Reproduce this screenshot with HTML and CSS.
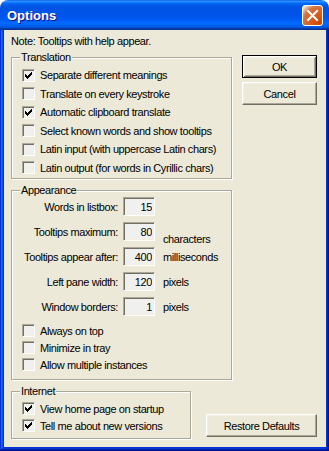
FILE: index.html
```html
<!DOCTYPE html>
<html lang="en">
<head>
    <meta charset="UTF-8">
    <meta name="viewport" content="width=device-width, initial-scale=1.0">
    <title>Options</title>
    <link rel="stylesheet" href="styles.css">
</head>
<body>
    <svg class="defs" width="0" height="0">
        <defs>
            <symbol id="tick" viewBox="0 0 9 9">
                <path d="M1 3h1v3H1zM2 4h1v3H2zM3 5h1v3H3zM4 4h1v3H4zM5 3h1v3H5zM6 2h1v3H6zM7 1h1v3H7z"/>
            </symbol>
        </defs>
    </svg>

    <div class="window">
        <div class="titlebar">
            <span class="title">Options</span>
            <span class="close">
                <svg width="19" height="19" viewBox="0 0 19 19"><path d="M5 5L14 14M14 5L5 14" stroke="#fff" stroke-width="2" stroke-linecap="square"/></svg>
            </span>
        </div>

        <div class="frame">
            <div class="client">
                <p class="note">Note: Tooltips with help appear.</p>

                <div class="main">
                    <div class="groups">
                        <fieldset class="group translation">
                            <legend>Translation</legend>
                            <div class="check"><span class="box"><svg><use href="#tick"/></svg></span>Separate different meanings</div>
                            <div class="check"><span class="box"></span>Translate on every keystroke</div>
                            <div class="check"><span class="box"><svg><use href="#tick"/></svg></span>Automatic clipboard translate</div>
                            <div class="check"><span class="box"></span>Select known words and show tooltips</div>
                            <div class="check"><span class="box"></span>Latin input (with uppercase Latin chars)</div>
                            <div class="check"><span class="box"></span>Latin output (for words in Cyrillic chars)</div>
                        </fieldset>

                        <fieldset class="group appearance">
                            <legend>Appearance</legend>
                            <div class="fields">
                                <label>Words in listbox:</label>
                                <input class="edit" type="text" value="15">
                                <span></span>

                                <label>Tooltips maximum:</label>
                                <input class="edit" type="text" value="80">
                                <span class="unit low">characters</span>

                                <label>Tooltips appear after:</label>
                                <input class="edit" type="text" value="400">
                                <span class="unit">milliseconds</span>

                                <label>Left pane width:</label>
                                <input class="edit" type="text" value="120">
                                <span class="unit">pixels</span>

                                <label>Window borders:</label>
                                <input class="edit" type="text" value="1">
                                <span class="unit">pixels</span>
                            </div>
                            <div class="check"><span class="box"></span>Always on top</div>
                            <div class="check"><span class="box"></span>Minimize in tray</div>
                            <div class="check"><span class="box"></span>Allow multiple instances</div>
                        </fieldset>
                    </div>

                    <div class="side">
                        <button class="btn default">OK</button>
                        <button class="btn">Cancel</button>
                    </div>
                </div>

                <div class="bottom">
                    <fieldset class="group internet">
                        <legend>Internet</legend>
                        <div class="check"><span class="box"><svg><use href="#tick"/></svg></span>View home page on startup</div>
                        <div class="check"><span class="box"><svg><use href="#tick"/></svg></span>Tell me about new versions</div>
                    </fieldset>
                    <button class="btn restore">Restore Defaults</button>
                </div>
            </div>
        </div>
    </div>
</body>
</html>
```

FILE: styles.css
```css
body {
    margin: 0;
    background: #fff;
    font-family: "Liberation Sans", Arial, sans-serif;
    font-size: 11px;
    letter-spacing: -0.4px;
    color: #000;
}

.defs {
    position: absolute;
}

.window {
    width: 329px;
    height: 451px;
    display: flex;
    flex-direction: column;
}

/* title bar */
.titlebar {
    height: 30px;
    flex-shrink: 0;
    display: flex;
    align-items: center;
    justify-content: space-between;
    padding: 0 6px 0 7px;
    border-radius: 8px 8px 0 0;
    background: linear-gradient(to bottom, #0058ee 0%, #3593ff 4%, #288eff 6%, #127dff 8%, #036ffc 10%, #0262ee 14%, #0057e5 20%, #0054e3 24%, #0055eb 56%, #005bf5 66%, #026afe 76%, #0062ef 86%, #0052d6 92%, #0040ab 94%, #003092 100%);
    color: #fff;
}

.title {
    font-size: 13px;
    font-weight: bold;
    letter-spacing: 0;
    text-shadow: 1px 1px #0f1089;
}

.close {
    width: 21px;
    height: 21px;
    box-sizing: border-box;
    display: flex;
    border: 1px solid #fff;
    border-radius: 3px;
    margin-top: 1px;
    background: radial-gradient(circle at 90% 90%, #cc4600 0%, #dc6527 55%, #cd7546 70%, #ffccb2 90%, #fff 100%);
}

/* window frame */
.frame {
    flex: 1;
    display: flex;
    padding: 0 4px 4px;
    background: #0831d9;
    box-shadow: inset -1px -1px #00138c, inset 1px 0 #0831d9, inset -2px -2px #001ea0, inset 2px 0 #166aee, inset -3px -3px #003bda, inset 3px 0 #0855dd;
}

.client {
    flex: 1;
    background: #ece9d8;
    padding: 5px 9px 0 7px;
}

.note {
    margin: 0 0 3px;
    line-height: 13px;
}

.main {
    display: flex;
    align-items: flex-start;
    gap: 10px;
}

.groups {
    width: 221px;
}

/* etched group boxes */
.group {
    margin: 0;
    min-width: 0;
    padding: 2px 0 1px 10px;
    border: 1px solid #aca899;
    box-shadow: inset 1px 1px #fff, 1px 1px #fff;
}

.group legend {
    padding: 0 1px;
    margin-left: -2px;
    line-height: 13px;
    background: #ece9d8;
}

.appearance {
    margin-top: 5px;
    padding-top: 0;
    padding-bottom: 6px;
}

.internet {
    width: 180px;
    box-sizing: border-box;
    padding-bottom: 4px;
}

/* checkboxes */
.check {
    display: flex;
    align-items: center;
    gap: 5px;
    height: 18.5px;
    white-space: nowrap;
}

.appearance .check,
.internet .check {
    height: 17px;
}

.box {
    width: 13px;
    height: 13px;
    flex-shrink: 0;
    box-sizing: border-box;
    padding: 1px;
    border: 1px solid;
    border-color: #aca899 #fff #fff #aca899;
    box-shadow: inset 1px 1px #716f64, inset -1px -1px #f1efe2;
    background: #f0f0ee;
}

.box svg {
    display: block;
    width: 9px;
    height: 9px;
    fill: #000;
}

/* edit fields */
.fields {
    display: grid;
    grid-template-columns: 100px 32px auto;
    column-gap: 5px;
    row-gap: 6px;
    margin-left: -4px;
    margin-bottom: 6px;
}

.fields label {
    text-align: right;
    align-self: center;
    white-space: nowrap;
}

.edit {
    width: 32px;
    height: 19px;
    box-sizing: border-box;
    margin: 0;
    padding: 0 2px 0 0;
    font: inherit;
    letter-spacing: inherit;
    text-align: right;
    border: 1px solid;
    border-color: #aca899 #fff #fff #aca899;
    box-shadow: inset 1px 1px #716f64, inset -1px -1px #f1efe2;
    background: #f0f0ee;
    color: #000;
    outline: none;
}

.unit {
    align-self: center;
    padding-left: 3px;
    white-space: nowrap;
}

.unit.low {
    align-self: end;
    margin-bottom: -4px;
}

/* buttons */
.side {
    display: flex;
    flex-direction: column;
    gap: 4px;
    padding-top: 4px;
}

.btn {
    width: 75px;
    height: 23px;
    box-sizing: border-box;
    margin: 0;
    padding: 0;
    font: inherit;
    letter-spacing: inherit;
    color: #000;
    background: #ece9d8;
    border: 1px solid;
    border-color: #fff #716f64 #716f64 #fff;
    box-shadow: inset -1px -1px #aca899, inset 1px 1px #f1efe2;
}

.btn.default {
    border-color: #000;
    box-shadow: inset 1px 1px #fff, inset -1px -1px #716f64, inset 2px 2px #f1efe2, inset -2px -2px #aca899;
}

.bottom {
    display: flex;
    justify-content: space-between;
    align-items: flex-end;
    margin-top: 5px;
}

.restore {
    width: 111px;
    margin-bottom: 2px;
}
```
